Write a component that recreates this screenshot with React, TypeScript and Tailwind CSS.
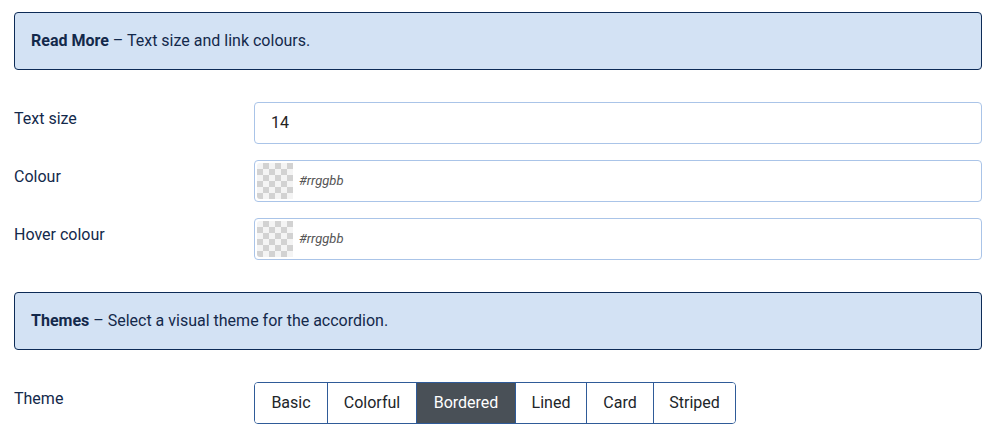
import React from "react"

const font = { fontFamily: "Roboto, 'Liberation Sans', sans-serif" }

function Notice({ title, text }: { title: string; text: string }) {
  return (
    <div className="border border-[#0d2b57] rounded-[4px] bg-[#d3e2f4] px-4 h-[58px] flex items-center text-[16px] text-[#13294b]">
      <span>
        <strong className="font-bold">{title}</strong> – {text}
      </span>
    </div>
  )
}

function Row({ label, children }: { label: string; children: React.ReactNode }) {
  return (
    <div className="flex">
      <div className="w-[240px] shrink-0 pt-[6px] leading-[22px] text-[16px] text-[#13294b]">{label}</div>
      <div className="flex-1">{children}</div>
    </div>
  )
}

function Swatch() {
  return (
    <div
      className="w-[36px] h-[36px] rounded-l-[3px] shrink-0"
      style={{
        backgroundColor: "#f4f4f4",
        backgroundImage:
          "linear-gradient(45deg, #d2d2d2 25%, transparent 25%, transparent 75%, #d2d2d2 75%), linear-gradient(45deg, #d2d2d2 25%, transparent 25%, transparent 75%, #d2d2d2 75%)",
        backgroundSize: "12px 12px",
        backgroundPosition: "0 0, 6px 6px",
      }}
    />
  )
}

function ColourInput() {
  return (
    <div className="h-[42px] border border-[#aac4e8] rounded-[4px] bg-white flex items-center pl-[2px]">
      <Swatch />
      <span className="ml-[6px] text-[13px] italic text-[#555]">#rrggbb</span>
    </div>
  )
}

const themes = [
  { name: "Basic", w: "w-[72px]" },
  { name: "Colorful", w: "w-[89px]" },
  { name: "Bordered", w: "w-[99px]" },
  { name: "Lined", w: "w-[71px]" },
  { name: "Card", w: "w-[67px]" },
  { name: "Striped", w: "w-[82px]" },
]

export default function App() {
  return (
    <div className="bg-white min-h-[438px] pl-[14px] pr-[13px] pt-[12px] w-[995px] box-border" style={font}>
      <Notice title="Read More" text="Text size and link colours." />

      <div className="mt-[32px] flex flex-col gap-4">
        <Row label="Text size">
          <div className="h-[42px] border border-[#aac4e8] rounded-[4px] bg-white flex items-center px-4 text-[16px] text-[#222]">
            14
          </div>
        </Row>
        <Row label="Colour">
          <ColourInput />
        </Row>
        <Row label="Hover colour">
          <ColourInput />
        </Row>
      </div>

      <div className="mt-[32px]">
        <Notice title="Themes" text="Select a visual theme for the accordion." />
      </div>

      <div className="mt-[32px]">
        <Row label="Theme">
          <div className="inline-flex h-[42px] border border-[#2f5b98] rounded-[4px] overflow-hidden">
            {themes.map((t, i) => (
              <button
                key={t.name}
                className={
                  t.w +
                  " text-[16px] h-full " +
                  (i > 0 ? "border-l border-[#2f5b98] " : "") +
                  (t.name === "Bordered" ? "bg-[#495057] text-white" : "bg-white text-[#212529]")
                }
              >
                {t.name}
              </button>
            ))}
          </div>
        </Row>
      </div>
    </div>
  )
}
